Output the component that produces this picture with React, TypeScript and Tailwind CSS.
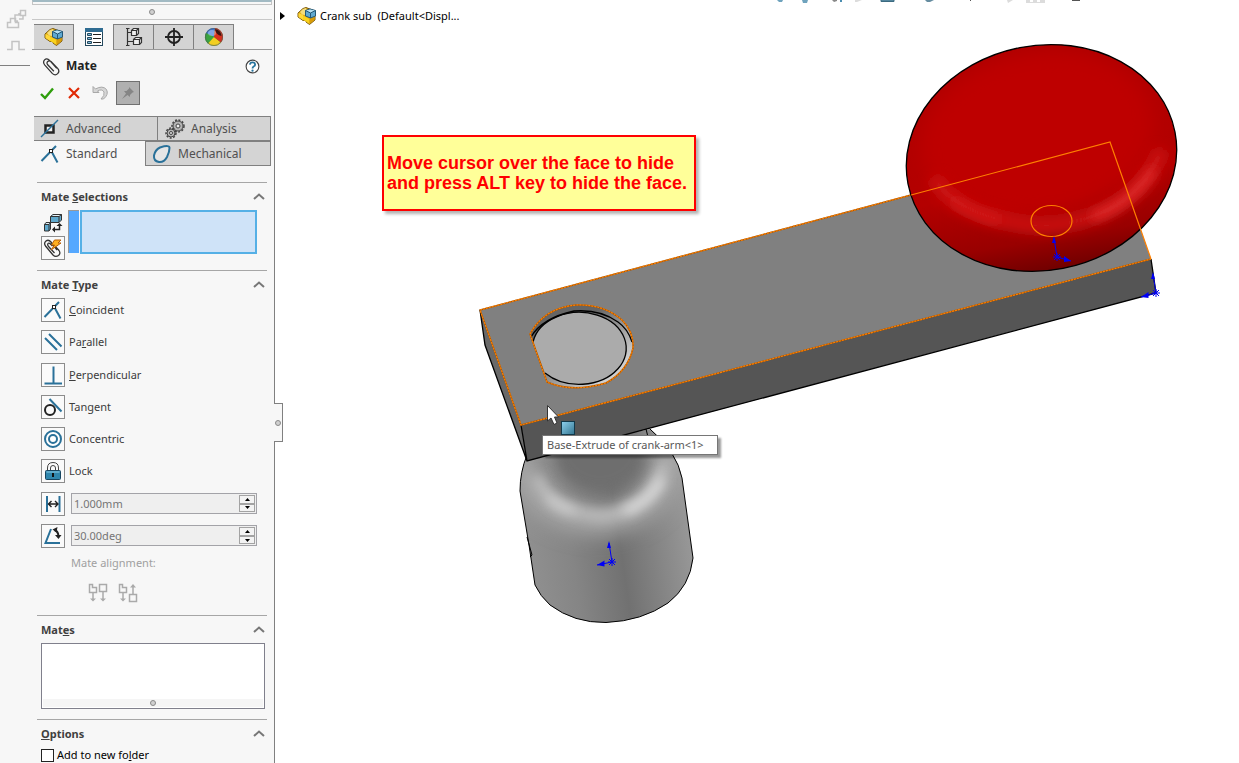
import { useState } from "react";
import type { ReactNode } from "react";

import cn from "clsx";

type IconProps = { children: ReactNode; size?: number; box?: string };

const Icon: React.FC<IconProps> = ({ children, size = 20, box = "0 0 20 20" }) => (
	<svg width={size} height={size} viewBox={box} fill="none" className="shrink-0" aria-hidden="true">
		{children}
	</svg>
);

const PartIcon = () => (
	<Icon>
		<path d="M1 7 L6 2.500 L9 1.500 L18 5 V14 L12.500 18.500 L9 16 V14.500 L6 14.500 L1 11 Z" fill="#e2ac12" stroke="#7a5a10" />
		<path d="M1.500 7 L6 9 V14 L1.500 11 Z" fill="#ffd83a" />
		<path d="M6 9.500 L12.500 13 V18 L9 15.500 L6 14 Z" fill="#f9d21d" />
		<path d="M12.500 13 L17.500 10 V14 L12.500 18 Z" fill="#d99c08" />
		<path d="M3 6 L6 3 L9 2 L10 5 L8 9 L5 8.500 Z" fill="#f4dc7c" />
		<path d="M8.500 4.500 L13 3 L18.500 4.500 V10 L13.500 12 L8.500 10 Z" fill="#5fa8d0" stroke="#245877" />
		<path d="M9 4.500 L13 3.500 L18 4.500 L13.500 7 Z" fill="#b5dff2" />
		<path d="M13.500 7 V12 M8.500 4.500 L13.500 7 L18.500 4.500" stroke="#245877" />
	</Icon>
);

const PropertyIcon = () => (
	<Icon>
		<rect x="1.500" y="1.500" width="17" height="17" fill="#fff" stroke="#24495e" />
		<rect x="1" y="1" width="18" height="4" fill="#2f6c92" />
		<path d="M3.500 6.500h4v2h-4zM3.500 10.500h4v2h-4zM3.500 14.500h4v2h-4z" fill="#7fb7d6" stroke="#24495e" />
		<path d="M9 7.500h8M9 11.500h8M9 15.500h8" stroke="#222" />
	</Icon>
);

const ConfigIcon = () => (
	<Icon>
		<path d="M2 1.500h3.500M2 18.500h3.500M3.500 1.500v17M3.500 5.500h5M3.500 14.500h6" stroke="#333" strokeWidth="1.200" />
		<path d="M7.500 3.500l2-2h5v5l-2 2h-5zM9.500 12.500l2-2h6v5l-2 2h-6z" fill="#eee" stroke="#333" strokeWidth="1.200" />
		<path d="M7.500 3.500h5v5M12.500 3.500l2-2M9.500 12.500h6v5M15.500 12.500l2-2" stroke="#333" strokeWidth="1.200" />
	</Icon>
);

const TargetIcon = () => (
	<Icon>
		<circle cx="10" cy="10" r="6" stroke="#222" strokeWidth="1.800" />
		<path d="M10 1v18M1 10h18" stroke="#222" strokeWidth="1.800" />
	</Icon>
);

const AppearanceIcon = () => (
	<Icon>
		<circle cx="10" cy="10" r="9" fill="#2f9b3c" />
		<path d="M10 10 L2 6 A9 9 0 0 1 11 1 Z" fill="#3d78d8" />
		<path d="M10 10 L2 6 A9 9 0 0 0 4 16.500 Z" fill="#3aa43f" />
		<path d="M10 10 L4 16.500 A9 9 0 0 0 17 15.500 Z" fill="#f2cf21" />
		<path d="M10 10 L17 15.500 A9 9 0 0 0 11 1 Z" fill="#d8301d" />
		<path d="M11 2 Q17 3 17.500 9 Q12 8 11 2Z" fill="#3a1410" />
		<ellipse cx="8" cy="6" rx="4" ry="3" fill="#fff" opacity=".35" />
		<circle cx="10" cy="10" r="8.500" stroke="#555" strokeOpacity=".6" />
	</Icon>
);

const ClipIcon = () => (
	<Icon size={19}>
		<path d="M15.500 12 L8 3.500 Q5 .500 2.700 3 Q.500 5.500 3 8.500 L11 17.500 Q14 20 16.500 17.500 Q19 15 16.500 12 L9.500 4.800 Q7.500 3.300 6 4.800 Q4.500 6.300 6 8.200 L12.500 15" stroke="#333" strokeWidth="1.300" />
	</Icon>
);

const HelpIcon = () => (
	<Icon size={15}>
		<circle cx="10" cy="10" r="8.500" fill="#fff" stroke="#444" strokeWidth="1.500" />
		<path d="M6.500 7.500 Q7 4.500 10 4.500 Q13.500 4.500 13.500 7.500 Q13.500 9 11.500 10 Q10 11 10 12.500" stroke="#27749e" strokeWidth="2.400" />
		<circle cx="10" cy="15.500" r="1.500" fill="#27749e" />
	</Icon>
);

const CoincidentIcon = () => (
	<Icon>
		<path d="M1.500 17 L16 2 M11 6.500 L17.500 18.500" stroke="#2a7199" strokeWidth="2" />
		<rect x="9.500" y="5.500" width="3" height="3" fill="#fff" stroke="#222" />
	</Icon>
);

const ParallelIcon = () => (
	<Icon>
		<path d="M2 6 L14 18 M6 2 L18.500 14.500" stroke="#2a7199" strokeWidth="2" />
	</Icon>
);

const PerpendicularIcon = () => (
	<Icon>
		<path d="M10.500 1.500 V18 M1.500 18.500 H19" stroke="#2a7199" strokeWidth="2" />
	</Icon>
);

const TangentIcon = () => (
	<Icon>
		<circle cx="7" cy="13" r="5" stroke="#222" strokeWidth="2" />
		<path d="M6.500 2 L18.500 14.500" stroke="#2a7199" strokeWidth="2" />
	</Icon>
);

const ConcentricIcon = () => (
	<Icon>
		<circle cx="10" cy="10" r="8" fill="#fff" stroke="#2a7199" strokeWidth="2" />
		<circle cx="10" cy="10" r="4" stroke="#2a7199" strokeWidth="2" />
	</Icon>
);

const LockIcon = () => (
	<Icon>
		<path d="M4.500 10 V7 Q4.500 1.500 10 1.500 Q15.500 1.500 15.500 7 V10 M7.500 10 V7 Q7.500 4.500 10 4.500 Q12.500 4.500 12.500 7 V10" stroke="#444" />
		<rect x="2.500" y="9.500" width="15" height="9" rx="1" fill="#2f86ad" stroke="#174560" />
		<path d="M3.500 11h13" stroke="#8fd0ea" />
		<path d="M10 12v4" stroke="#111" strokeWidth="2" />
	</Icon>
);

const DistanceIcon = () => (
	<Icon>
		<path d="M4 2v16M16.500 2v16" stroke="#2a7199" strokeWidth="2" />
		<path d="M5 10h10M8.500 7 L5.500 10 L8.500 13 M12 7 L15 10 L12 13" stroke="#222" strokeWidth="1.400" />
	</Icon>
);

const AngleIcon = () => (
	<Icon>
		<path d="M8 3 L2.500 17 H17" stroke="#2a7199" strokeWidth="2" />
		<path d="M11.500 4 Q15 5 15.500 10" stroke="#222" strokeWidth="2" />
		<path d="M9.500 3.500 L14.500 1 L13.500 6.500 Z M12 9 H18.500 L15.500 13 Z" fill="#222" />
	</Icon>
);

const AdvancedIcon = () => (
	<Icon>
		<rect x="5.500" y="6.500" width="8" height="7" fill="#eee" stroke="#222" strokeWidth="2.500" />
		<path d="M1 18 L18 1" stroke="#2a7199" strokeWidth="1.500" />
	</Icon>
);

const AnalysisIcon = () => (
	<Icon>
		<circle cx="13" cy="7" r="6" stroke="#444" strokeWidth="1.500" strokeDasharray="2 1.500" />
		<circle cx="13" cy="7" r="5" fill="#b4b4b4" stroke="#444" />
		<circle cx="13" cy="7" r="2" fill="#eee" stroke="#444" />
		<circle cx="6" cy="14" r="5" stroke="#444" strokeWidth="1.500" strokeDasharray="2 1.500" />
		<circle cx="6" cy="14" r="4" fill="#b4b4b4" stroke="#444" />
		<circle cx="6" cy="14" r="1.500" fill="#eee" stroke="#444" />
	</Icon>
);

const MechanicalIcon = () => (
	<Icon>
		<path d="M8 3.500 Q18 .500 17.500 4 Q17.500 8 15 13 Q12 18.500 7 18 Q1.500 17 2 11.500 Q3 6 8 3.500 Z" fill="#e6e6e6" stroke="#2a7199" strokeWidth="2" />
	</Icon>
);

const EntitiesIcon = () => (
	<Icon>
		<path d="M7.500 3.500 L10 1.500 H18.500 V7 L16 9.500 H7.500 Z M1.500 11.500 L3 9.500 H7.500 V16 L6 18 H1.500 Z" fill="#5fa8cc" stroke="#333" />
		<path d="M8 3.500 L10.500 2 H18 L16 3.500 Z M2 11.500 L3.500 10 H7 L6 11.500 Z" fill="#e4f1f7" />
		<path d="M7.500 3.500 H16 V9.500 M16 3.500 L18.500 1.500 M1.500 11.500 H6 V18 M6 11.500 L7.500 9.500" stroke="#333" />
		<path d="M11 16.500 H16.500 V12" stroke="#222" strokeWidth="1.500" />
		<path d="M9 16.500 L12 13.500 V19.500 Z M13.500 13 L16.500 10 L19.500 13 Z" fill="#222" />
	</Icon>
);

const MultiMateIcon = () => (
	<Icon>
		<path d="M14 12 L8 4 Q5.500 1 3 3 Q.500 5 2.500 8 L10 17 Q12.500 19.500 15.500 17.500 Q18 15.500 16 12.500 L11 7 M9.500 8 Q6 4 5 5.500 Q4 7 6 9 L11.500 15" stroke="#333" strokeWidth="1.300" />
		<path d="M11.500 2 H18 L15 5 H18 L8 12 L11.500 7 H8.500 Z" fill="#ffb01f" stroke="#b55e08" />
	</Icon>
);

const AlignIcon: React.FC<{ anti?: boolean }> = ({ anti }) => (
	<Icon>
		<path d="M1.500 1.500 h3 v3 h4 v5 h-7z M5 10v7" stroke="#aaa" strokeWidth="1.500" />
		<path d="M2 15.500h6l-3 3z" fill="#aaa" />
		{anti ? (
			<>
				<path d="M11.500 11.500h7v7h-7zM15 11V3" stroke="#aaa" strokeWidth="1.500" />
				<path d="M12 4.500h6l-3-3.500z" fill="#aaa" />
			</>
		) : (
			<>
				<path d="M11.500 1.500h7v7h-7zM15 9v8" stroke="#aaa" strokeWidth="1.500" />
				<path d="M12 15.500h6l-3 3z" fill="#aaa" />
			</>
		)}
	</Icon>
);

const Grip: React.FC<{ className?: string }> = ({ className }) => (
	<span className={cn("block size-[6px] shrink-0 rounded-full border border-[#8a8a8a] bg-[#d0d0d0]", className)} />
);

const managerTabs = [
	{ name: "FeatureManager", icon: <PartIcon /> },
	{ name: "PropertyManager", icon: <PropertyIcon /> },
	{ name: "ConfigurationManager", icon: <ConfigIcon /> },
	{ name: "DimXpertManager", icon: <TargetIcon /> },
	{ name: "DisplayManager", icon: <AppearanceIcon /> },
];

const mateTypes = [
	{ id: "coincident", icon: <CoincidentIcon />, label: <><u>C</u>oincident</> },
	{ id: "parallel", icon: <ParallelIcon />, label: <>Pa<u>r</u>allel</> },
	{ id: "perpendicular", icon: <PerpendicularIcon />, label: <><u>P</u>erpendicular</> },
	{ id: "tangent", icon: <TangentIcon />, label: <>Tangent</> },
	{ id: "concentric", icon: <ConcentricIcon />, label: <>Concentric</> },
	{ id: "lock", icon: <LockIcon />, label: <>Lock</> },
];

const iconBox = "flex size-6 shrink-0 items-center justify-center border border-[#8c8c8c] bg-[#fafafa]";

const Section: React.FC<{ title: ReactNode; children: ReactNode }> = ({ title, children }) => {
	const [isOpen, setIsOpen] = useState(true);

	return (
		<section className="mr-[7px] ml-[7px] border-t border-[#a6a6a6]">
			<h2>
				<button
					className="flex h-[27px] w-full items-center justify-between pr-[2px] pl-1 font-bold text-[#404040]"
					aria-expanded={isOpen}
					onClick={() => setIsOpen((prev) => !prev)}
				>
					<span>{title}</span>
					<svg width="12" height="8" viewBox="0 0 12 8" fill="none" className={cn({ "rotate-180": !isOpen })}>
						<path d="M1 6 L6 1.500 L11 6" stroke="#777" strokeWidth="2" />
					</svg>
				</button>
			</h2>
			{isOpen && children}
		</section>
	);
};

const Spinner: React.FC<{ name: string; icon: ReactNode; value: string }> = ({ name, icon, value }) => (
	<div className="flex h-6 items-center pr-[10px]">
		<button className={iconBox} aria-label={name}>
			{icon}
		</button>
		<div className="ml-[6px] flex h-[21px] min-w-0 flex-1 border border-[#a3a3a8] bg-[#efefef] p-px">
			<input disabled aria-label={`${name} value`} defaultValue={value} className="min-w-0 flex-1 bg-transparent pl-px text-[#757575]" />
			<div className="flex w-4 flex-col">
				<button className="flex flex-1 items-center justify-center border border-[#a3a3a3] bg-[#f3f3f3]" aria-label={`Increase ${name}`}>
					<svg width="5" height="3" viewBox="0 0 5 3"><path d="M0 3 L2.500 0 L5 3Z" /></svg>
				</button>
				<button className="flex flex-1 items-center justify-center border border-[#a3a3a3] bg-[#f3f3f3]" aria-label={`Decrease ${name}`}>
					<svg width="5" height="3" viewBox="0 0 5 3"><path d="M0 0 L2.500 3 L5 0Z" /></svg>
				</button>
			</div>
		</div>
	</div>
);

const mateTab = "flex items-center gap-[6px] text-left text-xs leading-4 text-[#505050]";

const MatePanel = () => (
	<aside className="relative z-10 flex w-[245px] shrink-0 flex-col border-r border-[#808080] text-[11px] leading-4 text-[#3c3c3c]">
		<div className="mr-[2px] ml-[2px] h-[5px] border border-t-2 border-[#c4c4c4] border-t-[#a2bac3]" />
		<div className="mr-[2px] ml-[2px] flex h-[15px] items-center justify-center border-b border-[#c8c8c8]">
			<Grip />
		</div>

		<nav className="mt-1 mr-[2px] ml-[2px] flex h-[26px] border-b border-[#9a9a9a] pl-[2px]">
			{managerTabs.map((tab) => (
				<button
					key={tab.name}
					aria-label={tab.name}
					className={cn("flex w-10 items-center justify-center border-r border-[#808080]", {
						"-mb-px bg-[#f7f7f7]": tab.name === "PropertyManager",
						"border-t bg-[#d4d4d4]": tab.name !== "PropertyManager",
					})}
				>
					{tab.icon}
				</button>
			))}
		</nav>

		<div className="flex h-8 items-center pr-[14px] pl-[12px]">
			<ClipIcon />
			<h1 className="ml-[5px] flex-1 text-xs font-bold text-[#222]">Mate</h1>
			<button aria-label="Help"><HelpIcon /></button>
		</div>
		<div className="-mt-px flex h-6 items-center pl-[10px]">
			<button aria-label="OK">
				<svg width="14" height="14" viewBox="0 0 14 14" fill="none"><path d="M1 8 L5 12 L13 2.500" stroke="#2f9e0c" strokeWidth="2.400" /></svg>
			</button>
			<button className="ml-[14px]" aria-label="Cancel">
				<svg width="12" height="12" viewBox="0 0 12 12" fill="none"><path d="M1 1 L11 11 M11 1 L1 11" stroke="#e02a05" strokeWidth="2.200" /></svg>
			</button>
			<button className="ml-3" aria-label="Undo">
				<svg width="17" height="16" viewBox="0 0 17 16" fill="none">
					<path d="M1 1.500 V7.500 H7 L5.500 6 Q10 3.500 12 7 Q13 10.500 9 14 H11.500 Q17 9.500 14.500 4.500 Q10.500 0 3.500 4 Z" fill="#d6d6d6" stroke="#a8a8a8" />
				</svg>
			</button>
			<button className="ml-[7px] flex size-6 items-center justify-center border border-[#707070] bg-[#b0b0b0]" aria-label="Keep visible">
				<svg width="14" height="14" viewBox="0 0 14 14"><path d="M8 1 L13 6 L11.500 6.500 L9 9 L9 11 L6.500 9 L1 13 L5 7.500 L3 5 L5.500 5 L8 2.500 Z" fill="#858585" /></svg>
			</button>
		</div>

		<div className="mt-[11px] mr-[3px] ml-[4px] flex h-[25px] border-b border-[#808080]">
			<button className={cn(mateTab, "w-[124px] border-t border-r border-[#808080] bg-[#d4d4d4] pl-[6px]")}>
				<AdvancedIcon />
				Advanced
			</button>
			<button className={cn(mateTab, "flex-1 border-t border-r border-[#808080] bg-[#d4d4d4] pl-[7px]")}>
				<AnalysisIcon />
				Analysis
			</button>
		</div>
		<div className="mr-[3px] ml-[4px] flex h-[25px]">
			<button className={cn(mateTab, "w-[111px] bg-[#f7f7f7] pl-[6px]")}>
				<CoincidentIcon />
				Standard
			</button>
			<button className={cn(mateTab, "flex-1 border border-[#808080] bg-[#d4d4d4] pl-[6px]")}>
				<MechanicalIcon />
				Mechanical
			</button>
		</div>

		<div className="mt-4">
			<Section title={<>Mate <u>S</u>elections</>}>
				<div className="flex h-[60px] pr-[10px] pl-1">
					<div className="flex w-6 flex-col items-center">
						<button className="flex h-[26px] items-center" aria-label="Entities to mate"><EntitiesIcon /></button>
						<button className={iconBox} aria-label="Multiple mate mode"><MultiMateIcon /></button>
					</div>
					<span className="ml-[3px] h-[43px] w-[11px] border-t border-l border-[#999] bg-[#55a8ff]" />
					<input aria-label="Mate selections" readOnly className="ml-px h-11 min-w-0 flex-1 border-2 border-[#55b0e6] bg-[#cfe3f8]" />
				</div>
			</Section>

			<Section title={<>Mate <u>T</u>ype</>}>
				<div className="flex h-[250px] flex-col justify-between pl-1">
					{mateTypes.map((type) => (
						<button key={type.id} className="flex h-6 items-center gap-1 text-left">
							<span className={iconBox}>{type.icon}</span>
							<span>{type.label}</span>
						</button>
					))}
					<Spinner name="Distance" icon={<DistanceIcon />} value="1.000mm" />
					<Spinner name="Angle" icon={<AngleIcon />} value="30.00deg" />
				</div>
				<div className="mt-[7px] pb-3 pl-[34px] text-[#a0a0a0]">
					<p>Mate alignment:</p>
					<div className="mt-3 flex gap-[10px] pl-[17px]">
						<button disabled aria-label="Aligned"><AlignIcon /></button>
						<button disabled aria-label="Anti-aligned"><AlignIcon anti /></button>
					</div>
				</div>
			</Section>

			<Section title={<>Mat<u>e</u>s</>}>
				<div className="mr-[2px] mb-[10px] ml-1 flex h-[66px] flex-col border border-[#80808c] bg-white p-px">
					<textarea aria-label="Mates" readOnly className="block w-full flex-1 resize-none" />
					<div className="flex h-2 items-center justify-center bg-[#f5f5f5]">
						<Grip />
					</div>
				</div>
			</Section>

			<Section title={<><u>O</u>ptions</>}>
				<label className="flex items-center gap-[3px] pl-1 text-black">
					<input type="checkbox" className="size-[13px] appearance-none border border-[#222] bg-white" />
					<span>Add to new fo<u>l</u>der</span>
				</label>
			</Section>
		</div>

		<button className="absolute top-[403px] left-full flex h-[39px] w-[9px] items-center justify-center border border-l-0 border-[#808080] bg-[#f7f7f7]" aria-label="Collapse panel">
			<Grip />
		</button>
	</aside>
);

const Triad: React.FC<{ x: number; y: number; side: [number, number] }> = ({ x, y, side: [dx, dy] }) => (
	<g transform={`translate(${x} ${y})`} stroke="#0000f5" fill="#0000f5">
		<path d="M-4 0H4M0 -4V4M-3 -3L3 3M3 -3L-3 3" />
		<path d={`M0 0 L-3 -19 M0 0 L${dx} ${dy}`} />
		<path d="M-3 -21 L-5 -14 L-1 -14 Z" stroke="none" />
		<path d={`M${dx} ${dy} L${dx * 0.5} ${dy * 0.5 - 3} L${dx * 0.5} ${dy * 0.5 + 3} Z`} stroke="none" />
	</g>
);

const shaftOutline =
	"M527 455 Q520 472 520 491 L529 545 L535 585 Q540 596 550 605 Q574 623 606 622.500 Q642 621 668 603 Q690 586 693 558 L682 478 Q677 452 650 429";
const boreOutline = "M530 334 Q544 308 576 305 Q604 304 622 320 Q634 332 633 348 Q628 371 606 383 Q572 393 547 382 Z";

const CrankModel = () => (
	<svg viewBox="275 0 964 763" preserveAspectRatio="xMinYMin slice" className="absolute inset-0 h-full w-full" role="img" aria-label="Crank sub-assembly" fill="none">
		<defs>
			<linearGradient id="shaft" gradientUnits="userSpaceOnUse" x1="520" y1="560" x2="693" y2="535">
				<stop offset="0" stopColor="#929292" />
				<stop offset=".3" stopColor="#858585" />
				<stop offset=".58" stopColor="#717171" />
				<stop offset="1" stopColor="#999" />
			</linearGradient>
			<linearGradient id="bore" x1="0" y1="0" x2="1" y2="1">
				<stop offset=".35" stopColor="#656565" />
				<stop offset=".8" stopColor="#cfcfcf" />
			</linearGradient>
			<linearGradient id="rim" x1=".4" y1="0" x2=".6" y2="1">
				<stop offset="0" stopColor="#ac0000" />
				<stop offset=".6" stopColor="#b40000" />
				<stop offset=".82" stopColor="#990000" />
				<stop offset="1" stopColor="#600000" />
			</linearGradient>
			<linearGradient id="cube" x1="0" y1="0" x2="1" y2="1">
				<stop stopColor="#8ed2ef" />
				<stop offset="1" stopColor="#337590" />
			</linearGradient>
			<filter id="soft" filterUnits="userSpaceOnUse" x="480" y="20" width="740" height="640"><feGaussianBlur stdDeviation="6" /></filter>
			<filter id="softer" filterUnits="userSpaceOnUse" x="480" y="20" width="740" height="640"><feGaussianBlur stdDeviation="10" /></filter>
			<clipPath id="knobClip"><ellipse cx="1041.500" cy="158" rx="136" ry="112.500" transform="rotate(-11 1041.500 158)" /></clipPath>
			<clipPath id="shaftClip"><path d={shaftOutline} /></clipPath>
		</defs>

		{/* bottoms of the view toolbar buttons */}
		<g>
			<path d="M777 0h6l-1 2h-3zM802 0h6l-1 3h-4z" fill="#6fa3bd" />
			<path d="M832 0h5v1l-3 1z" fill="#888" />
			<path d="M840 0h2v2h-2z" fill="#4a8db0" />
			<path d="M855 0h7l-5 2h-2zM1007 0h6l-5 3zM1026 0h19v3h-19z" fill="#dcdcdc" />
			<path d="M881 0h13v1.500h-13z" fill="#6fa3bd" stroke="#3b6a80" />
			<path d="M925 0h9l-4 2h-3z" fill="#668da0" />
			<path d="M970 0h1v1h-1zM1072 0h8v1h-8z" fill="#555" />
			<path d="M1030 0h3v2h-3zM1037 0h3v2h-3z" fill="#fff" />
		</g>

		<g clipPath="url(#shaftClip)">
			<rect x="510" y="420" width="190" height="210" fill="url(#shaft)" />
			<path d="M516 440 Q522 518 600 522 Q672 514 676 440" stroke="#a6a6a6" strokeWidth="26" filter="url(#softer)" />
			<path d="M536 476 Q550 512 602 516 Q652 510 664 462" stroke="#c2c2c2" strokeWidth="9" filter="url(#soft)" />
			<path d="M624 511 Q652 502 662 478" stroke="#e2e2e2" strokeWidth="8" filter="url(#soft)" />
			<path d="M548 498 Q558 508 574 511" stroke="#dcdcdc" strokeWidth="5" filter="url(#soft)" />
			<ellipse cx="600" cy="456" rx="44" ry="34" fill="#6e6e6e" filter="url(#soft)" />
		</g>
		<path d={shaftOutline} stroke="#000" />
		<path d="M527 537 L532 555 L530 557 M646 429 L648 437" stroke="#000" />

		<path d="M480 310 L521 425 L527 461 L485 345 Z" fill="#696969" />
		<path d="M521 425 L1151 259 L1156 293 L527 461 Z" fill="#555" />
		<path d="M480 310 L1110 142 L1151 259 L521 425 Z" fill="#808080" />
		<path d="M480 310 L485 345 L527 461 L1156 293 L1151 259 M521 425 L527 461" stroke="#000" strokeWidth="1.300" />

		<path d={boreOutline} fill="url(#bore)" />
		<path d="M533 342 A47 36 0 1 1 545 373 Z" fill="#ababab" />
		<path d="M533 342 A47 36 0 1 1 545 373" stroke="#000" strokeWidth="1.300" />
		<path d="M531 337 Q542 318 574 311 Q600 309 618 322 Q628 329 632 342" stroke="#000" strokeWidth="1.300" />
		<path d={`M911 195 L480 310 L521 425 L1151 259 ${boreOutline}`} stroke="#a85604" strokeWidth="1.500" />
		<path d={`M911 195 L480 310 L521 425 L1151 259 ${boreOutline}`} stroke="#ff8000" strokeWidth="1.200" strokeDasharray="2 1" />

		<g clipPath="url(#knobClip)">
			<rect x="900" y="40" width="285" height="240" fill="url(#rim)" />
			<ellipse cx="1037" cy="134" rx="118" ry="83" fill="#be0000" transform="rotate(-11 1037 134)" filter="url(#softer)" />
			<path d="M934 178 Q958 218 1038 226 Q1128 224 1162 150" stroke="#cc1414" strokeWidth="13" filter="url(#soft)" />
			<path d="M1092 217 Q1132 204 1154 170" stroke="#e83030" strokeWidth="7" filter="url(#soft)" />
			<path d="M952 200 Q974 216 1000 220" stroke="#dc2424" strokeWidth="5" filter="url(#soft)" />
		</g>
		<ellipse cx="1041.500" cy="158" rx="136" ry="112.500" transform="rotate(-11 1041.500 158)" stroke="#000" strokeWidth="1.300" />
		<path d="M911 195 L1110 142 L1151 259" stroke="#ff8000" strokeWidth="1.200" />
		<ellipse cx="1051.500" cy="221" rx="20.500" ry="15.500" stroke="#ff8000" strokeWidth="1.200" />

		<Triad x={1057} y={257} side={[14, 4]} />
		<Triad x={1156} y={293} side={[-15, 4]} />
		<Triad x={612} y={562} side={[-15, 3]} />

		<path d="M547.500 405.500 V421 L551 418 L554 424.500 L557 423 L554.500 417 H558.500 Z" fill="#fff" stroke="#333" />
		<rect x="561.500" y="421.500" width="13" height="13" fill="url(#cube)" stroke="#123a4c" />
	</svg>
);

const Viewport = () => (
	<main className="relative min-w-0 flex-1 overflow-hidden bg-white">
		<CrankModel />
		<div className="relative flex h-8 items-center pl-[5px] text-[11px] leading-4 text-black">
			<button aria-label="Expand tree">
				<svg width="5" height="8" viewBox="0 0 5 8"><path d="M0 0 L5 4 L0 8Z" /></svg>
			</button>
			<span className="ml-3"><PartIcon /></span>
			<span className="ml-[3px] whitespace-pre">{"Crank sub  (Default<Displ..."}</span>
		</div>
		<p className="absolute top-[135px] left-[107px] w-[314px] border-2 border-[#f00] bg-[#ffff99] px-[3px] py-4 font-['Liberation_Sans',Arial,sans-serif] text-lg leading-5 font-bold whitespace-nowrap text-[#f00] shadow-[3px_3px_3px_rgba(0,0,0,0.3)]">
			Move cursor over the face to hide
			<br />
			and press ALT key to hide the face.
		</p>
		<div role="tooltip" className="absolute top-[435px] left-[267px] w-[176px] border border-[#767676] bg-white px-1 text-[11px] leading-[18px] whitespace-nowrap text-[#575757] shadow-[3px_3px_2px_rgba(0,0,0,0.4)]">
			Base-Extrude of crank-arm&lt;1&gt;
		</div>
	</main>
);

const App = () => (
	<div className="flex h-screen overflow-hidden bg-[#f7f7f7] font-['Noto_Sans',sans-serif]">
		<div className="h-[66px] w-[30px] shrink-0 border-b border-[#808080] pt-2 pl-[6px]">
			<svg width="21" height="44" viewBox="0 0 21 44" fill="none" stroke="#c3c3c3" strokeWidth="1.500">
				<path d="M14.500 2.500h5v5h-5zM17 8v3h-4M12 13h-3V7h4v-2M1.500 19.500h11v-5h-3v-4h-5v4h-3z" />
				<path d="M1 41.500h5v-8h7v8h6" />
			</svg>
		</div>
		<MatePanel />
		<Viewport />
	</div>
);

export default App;
